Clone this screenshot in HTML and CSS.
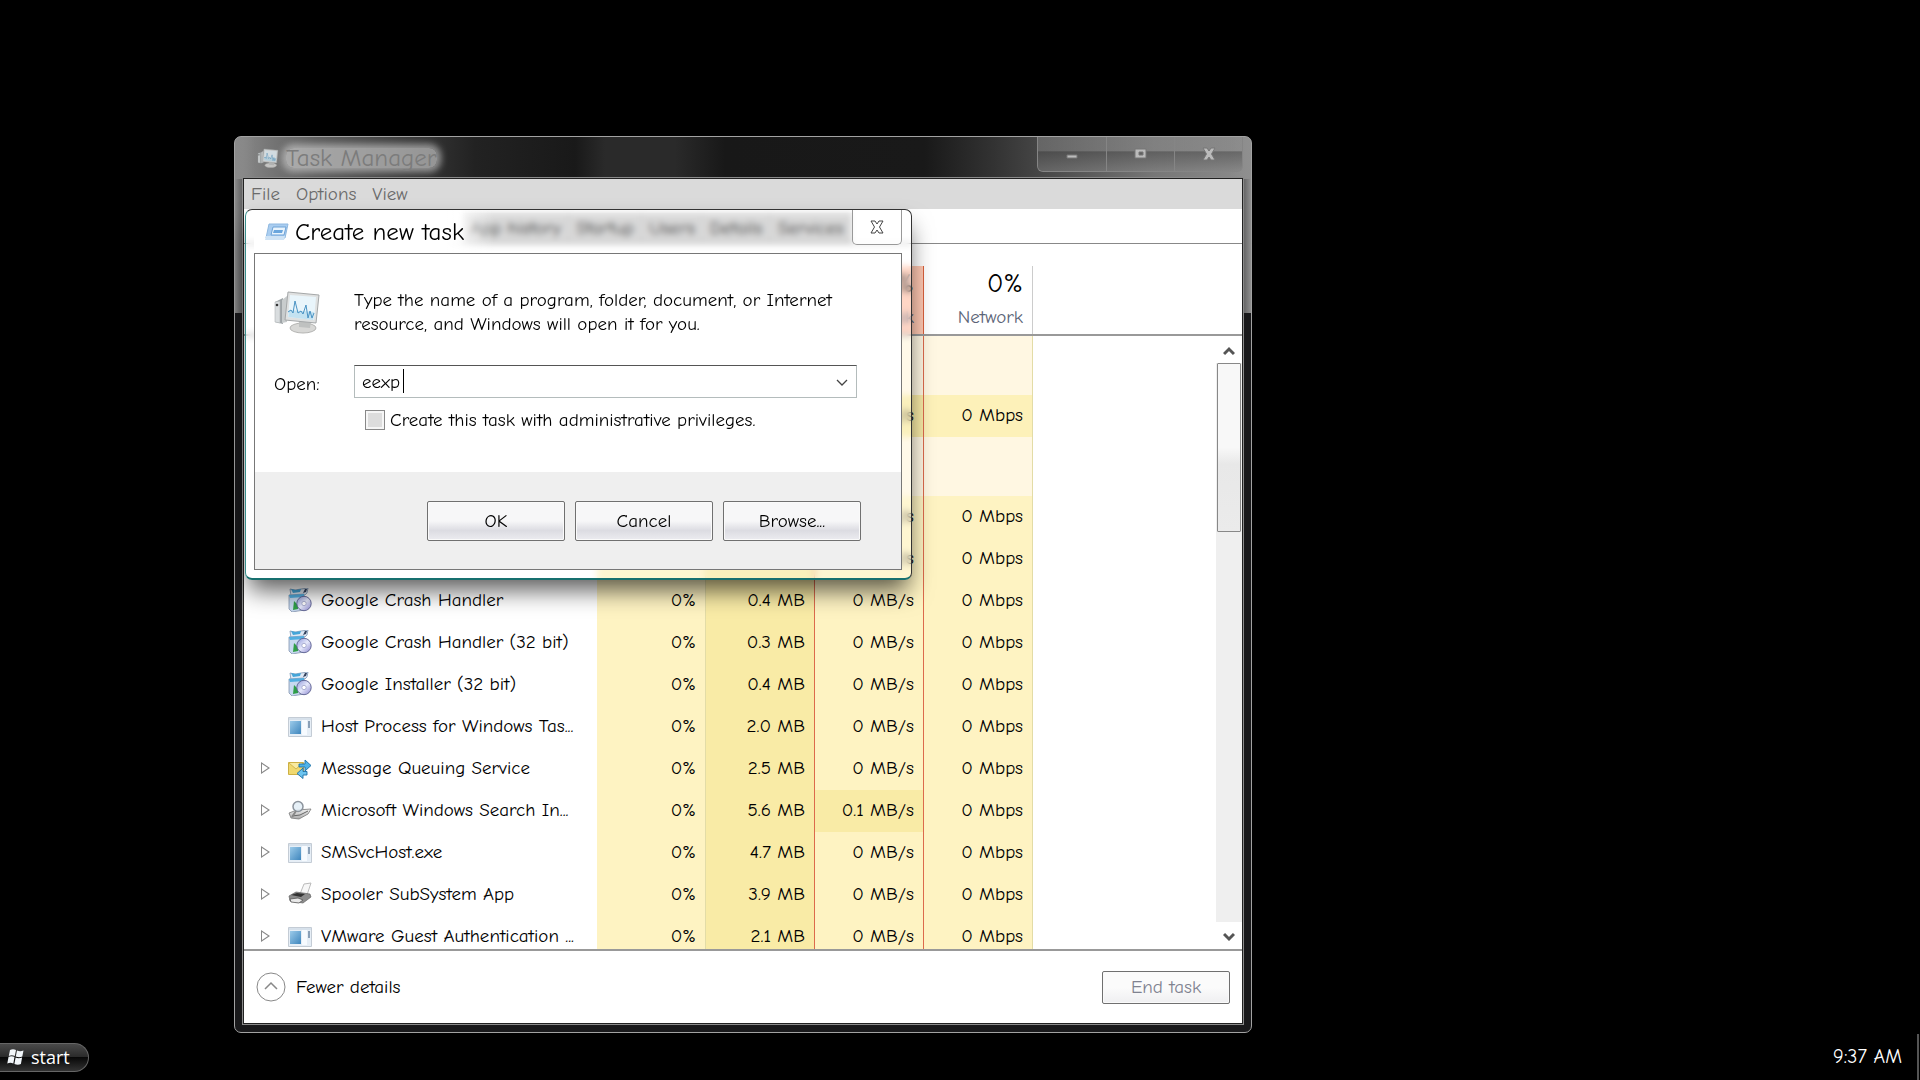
FILE: index.html
```html
<!DOCTYPE html>
<html lang="en">
<head>
<meta charset="utf-8">
<title>Task Manager</title>
<link rel="stylesheet" href="styles.css">
</head>
<body>
<svg class="defs" width="0" height="0" aria-hidden="true">
  <linearGradient id="blue" x1="0" y1="0" x2="1" y2="1"><stop offset="0" stop-color="#9ccbea"/><stop offset="1" stop-color="#3f86bd"/></linearGradient>
  <linearGradient id="disc" x1="0" y1="0" x2="1" y2="1"><stop offset="0" stop-color="#8d96d8"/><stop offset=".5" stop-color="#e6e9fb"/><stop offset="1" stop-color="#8a86cf"/></linearGradient>
  <linearGradient id="metal" x1="0" y1="0" x2="0" y2="1"><stop offset="0" stop-color="#f2f2f2"/><stop offset="1" stop-color="#a9a9a9"/></linearGradient>
  <symbol id="i-setup" viewBox="0 0 24 24">
    <path d="M2 1l5 1 6-1 7-1-1 5-2 2-14 1z" fill="#dfe9f5" stroke="#7d95b4" stroke-width=".8"/>
    <path d="M3 1l5 1 5-1-1 3-7 1z" fill="#45a5d8"/><path d="M17 1l2 0-1 3-3 1z" fill="#33415c"/>
    <path d="M1 7l15-1v16l-12 2-3-3z" fill="#c7d9ef" stroke="#8494b0" stroke-width=".8"/>
    <path d="M1 7l15-1v3l-14 1z" fill="#52aee0"/><path d="M6 13l4 4v4l-5 1z" fill="#2f9e47"/>
    <circle cx="16" cy="15.500" r="7.200" fill="url(#disc)" stroke="#5a5f8f" stroke-width=".9"/>
    <circle cx="16" cy="15.500" r="2.200" fill="#fff" stroke="#9a9fc8" stroke-width=".8"/>
  </symbol>
  <symbol id="i-app" viewBox="0 0 24 24">
    <path d="M.5 3.500h23v19H.5z" fill="#e6eef6" stroke="#c4ccd5"/><path d="M1 4h22v2H1z" fill="#d7e1eb"/>
    <path d="M2 7h11v13H2z" fill="url(#blue)"/><path d="M14 6h5v15h-5z" fill="#f7fbff"/><path d="M20 7h2v7h-2z" fill="#8aa0b8"/>
  </symbol>
  <symbol id="i-queue" viewBox="0 0 24 24">
    <path d="M.5 6.500h15v12H.5z" fill="#f0d970" stroke="#cdb044"/><path d="M1 7l7 6 7-6" fill="#f8eaa0" stroke="#d3b84f"/>
    <path d="M11 8h6V4l6 5.500L17 15v-4h-6z" fill="#4fb3e8" stroke="#1d6fa6" stroke-width=".9"/>
    <path d="M19 15.500h-4V12l-6 5.500 6 5V19h4z" fill="#6cc4ef" stroke="#1d6fa6" stroke-width=".9"/>
  </symbol>
  <symbol id="i-search" viewBox="0 0 24 24">
    <path d="M1 15l8-3 14-1-3 5-9 5-8-1z" fill="url(#metal)" stroke="#777" stroke-width=".8"/><path d="M4 18l8-1 8-4" fill="none" stroke="#666"/>
    <circle cx="10" cy="8.500" r="5" fill="#e2edf6" fill-opacity=".85" stroke="#8b939c" stroke-width="1.500"/><path d="M8 13l-4 6" stroke="#888" stroke-width="2"/>
  </symbol>
  <symbol id="i-printer" viewBox="0 0 24 24">
    <path d="M12 12l4-10 7-1-4 12z" fill="#f7f7f7" stroke="#bbb"/><path d="M1 14l7-4 14 2 1 3-8 6-13-2z" fill="#8c8c8c" stroke="#666" stroke-width=".7"/>
    <path d="M3 13l6-2 8 1-4 3z" fill="#333"/><path d="M2 17l8-1 5 2-4 3-8-1z" fill="#e9e9e9" stroke="#555" stroke-width=".8"/>
  </symbol>
  <symbol id="i-monitor" viewBox="0 0 46 44">
    <path d="M1 12l8-4v26l-8-2z" fill="#9da3a6"/><path d="M1 12l5-1v22l-5-1z" fill="#d9dddf" stroke="#aeb3b5" stroke-width=".6"/><circle cx="3" cy="15" r="1.300" fill="#333"/>
    <path d="M8 10l5-4v26l-5 1z" fill="#c8cccd"/>
    <ellipse cx="29" cy="38" rx="13" ry="5" fill="#d8d8d6" stroke="#b5b5b3"/><path d="M25 30l12 2-1 6-11-1z" fill="#bfc1c0"/>
    <path d="M14 2l31 3-3 28-31-3z" fill="#dfe1e1" stroke="#a5a8a9"/><path d="M16 5l26 2-2 23-26-3z" fill="#e9f5fb"/>
    <path d="M15 20l25 2-.7 8-25-3z" fill="#c3e2f1"/>
    <path d="M14 22l3-2 2 3 2-12 3 12 3-2 2 3 3-9 2 13 2-7 2 7 2-5" fill="none" stroke="#4a93c4"/>
  </symbol>
  <symbol id="i-run" viewBox="0 0 24 18">
    <path d="M4 1h19l-3 14H1z" fill="#a9cdf0" stroke="#8fb8e0"/><path d="M8 4h13l-2 8H6z" fill="#e9f4fd" stroke="#6ea2d6"/><path d="M9 7h9l-1 3H8z" fill="#6ba6dd"/><path d="M1 13h19l-1 4H0z" fill="#cfe3f5"/>
  </symbol>
  <symbol id="i-x" viewBox="0 0 14 14">
    <path d="M1 1h4l2 3 2-3h4L9.500 7l3.500 6H9l-2-3-2 3H1l3.500-6z"/>
  </symbol>
</svg>

<main class="desktop">
  <section class="window">
    <header class="titlebar">
      <svg class="title-icon"><use href="#i-monitor"/></svg>
      <h1 class="title">Task Manager</h1>
      <div class="controls">
        <button class="control" type="button"><svg width="12" height="14" viewBox="0 0 12 14"><path d="M1 8h10v3H1z" fill="#bbb" stroke="#777"/></svg></button>
        <button class="control" type="button"><svg width="14" height="14" viewBox="0 0 14 14"><path d="M1 2h11v9H1zM5 5v3h4V5z" fill="#bbb" fill-rule="evenodd" stroke="#777"/></svg></button>
        <button class="control" type="button"><svg width="14" height="14" fill="#bbb" stroke="#777"><use href="#i-x"/></svg></button>
      </div>
    </header>

    <div class="client">
      <nav class="menubar">
        <button type="button">File</button><button type="button">Options</button><button type="button">View</button>
      </nav>
      <div class="tabs">
        <button type="button">App history</button><button type="button">Startup</button><button type="button">Users</button><button type="button">Details</button><button type="button">Services</button>
      </div>

      <div class="list">
        <table class="processes">
          <colgroup><col class="c-name"><col class="c-num"><col class="c-num"><col class="c-num"><col class="c-num"><col></colgroup>
          <thead>
            <tr><th></th><th></th><th></th><th class="disk"><strong>0%</strong><span>Disk</span></th><th class="net"><strong>0%</strong><span>Network</span></th><th></th></tr>
          </thead>
          <tbody>
            <tr class="group"><td></td><td></td><td></td><td></td><td></td><td></td></tr>
            <tr><td></td><td></td><td class="hot"></td><td class="hot">0 MB/s</td><td class="mid">0 Mbps</td><td></td></tr>
            <tr class="group"><td></td><td></td><td></td><td></td><td></td><td></td></tr>
            <tr><td></td><td></td><td class="hot"></td><td>0 MB/s</td><td>0 Mbps</td><td></td></tr>
            <tr><td></td><td></td><td class="hot"></td><td>0 MB/s</td><td>0 Mbps</td><td></td></tr>
            <tr><td><div class="proc"><i></i><svg><use href="#i-setup"/></svg><span>Google Crash Handler</span></div></td><td>0%</td><td class="hot">0.4 MB</td><td>0 MB/s</td><td>0 Mbps</td><td></td></tr>
            <tr><td><div class="proc"><i></i><svg><use href="#i-setup"/></svg><span>Google Crash Handler (32 bit)</span></div></td><td>0%</td><td class="hot">0.3 MB</td><td>0 MB/s</td><td>0 Mbps</td><td></td></tr>
            <tr><td><div class="proc"><i></i><svg><use href="#i-setup"/></svg><span>Google Installer (32 bit)</span></div></td><td>0%</td><td class="hot">0.4 MB</td><td>0 MB/s</td><td>0 Mbps</td><td></td></tr>
            <tr><td><div class="proc"><i></i><svg><use href="#i-app"/></svg><span>Host Process for Windows Tas...</span></div></td><td>0%</td><td class="hot">2.0 MB</td><td>0 MB/s</td><td>0 Mbps</td><td></td></tr>
            <tr><td><div class="proc"><i class="more"></i><svg><use href="#i-queue"/></svg><span>Message Queuing Service</span></div></td><td>0%</td><td class="hot">2.5 MB</td><td>0 MB/s</td><td>0 Mbps</td><td></td></tr>
            <tr><td><div class="proc"><i class="more"></i><svg><use href="#i-search"/></svg><span>Microsoft Windows Search In...</span></div></td><td>0%</td><td class="hot">5.6 MB</td><td class="hot">0.1 MB/s</td><td>0 Mbps</td><td></td></tr>
            <tr><td><div class="proc"><i class="more"></i><svg><use href="#i-app"/></svg><span>SMSvcHost.exe</span></div></td><td>0%</td><td class="hot">4.7 MB</td><td>0 MB/s</td><td>0 Mbps</td><td></td></tr>
            <tr><td><div class="proc"><i class="more"></i><svg><use href="#i-printer"/></svg><span>Spooler SubSystem App</span></div></td><td>0%</td><td class="hot">3.9 MB</td><td>0 MB/s</td><td>0 Mbps</td><td></td></tr>
            <tr><td><div class="proc"><i class="more"></i><svg><use href="#i-app"/></svg><span>VMware Guest Authentication ...</span></div></td><td>0%</td><td class="hot">2.1 MB</td><td>0 MB/s</td><td>0 Mbps</td><td></td></tr>
          </tbody>
        </table>
        <div class="scrollbar">
          <button type="button" class="arrow"><svg width="12" height="10" viewBox="0 0 12 10"><path d="M1 8l5-5 5 5" fill="none" stroke="#555" stroke-width="3"/></svg></button>
          <div class="track"><div class="thumb"></div></div>
          <button type="button" class="arrow"><svg width="12" height="10" viewBox="0 0 12 10"><path d="M1 2l5 5 5-5" fill="none" stroke="#555" stroke-width="3"/></svg></button>
        </div>
      </div>

      <footer class="footer">
        <button type="button" class="fewer"><svg width="30" height="30" viewBox="0 0 30 30" fill="none" stroke="#888"><circle cx="15" cy="15" r="14"/><path d="M9 17l6-6 6 6" stroke-width="1.500"/></svg>Fewer details</button>
        <button type="button" class="push end" disabled>End task</button>
      </footer>

      <section class="dialog">
        <header class="dialog-title">
          <svg class="run-icon"><use href="#i-run"/></svg>
          <h2>Create new task</h2>
          <button type="button" class="dialog-close"><svg width="14" height="14" fill="#fff" stroke="#444"><use href="#i-x"/></svg></button>
        </header>
        <form class="dialog-body">
          <div class="fields">
            <svg class="big-icon"><use href="#i-monitor"/></svg>
            <p>Type the name of a program, folder, document, or Internet<br>resource, and Windows will open it for you.</p>
            <label for="open">Open:</label>
            <div class="combo">
              <span class="entry"><input id="open" type="text" value="eexp"><b class="caret"></b></span>
              <button type="button"><svg width="14" height="10" viewBox="0 0 14 10"><path d="M2 2l5 5 5-5" fill="none" stroke="#444" stroke-width="1.300"/></svg></button>
            </div>
            <div class="check"><input id="admin" type="checkbox"><label for="admin">Create this task with administrative privileges.</label></div>
          </div>
          <div class="actions">
            <button type="button" class="push">OK</button>
            <button type="button" class="push">Cancel</button>
            <button type="button" class="push">Browse...</button>
          </div>
        </form>
      </section>
    </div>
  </section>

  <footer class="taskbar">
    <button type="button" class="start"><svg width="18" height="18" viewBox="0 0 18 18" fill="#f2f6fa"><path d="M3 2q3-1.500 6 0L7.800 8q-3-1.500-6 0zM10 2.500q3 1.500 6.500 0L15.300 8.500q-3 1.500-6.500 0zM1.500 9q3-1.500 6 0L6.300 15.500q-3-1.500-6 0zM8.600 9.500q3 1.500 6.500 0L13.900 16q-3 1.500-6.500 0z"/></svg>start</button>
    <time class="clock">9:37 AM</time>
    <span class="peek"></span>
  </footer>
</main>
</body>
</html>
```
FILE: styles.css
```css
* { box-sizing: border-box; }
body {
  margin: 0;
  background: #000;
  color: #000;
  font: 19px/24px "Comic Sans MS", "Comic Neue", "Open Sans", sans-serif;
}
button, input { font: inherit; color: inherit; }
button { margin: 0; padding: 0; border: 0; background: none; }
h1, h2, p { margin: 0; font-weight: 400; }
.defs { position: absolute; }
.desktop { position: relative; min-height: 100vh; overflow: hidden; display: flex; flex-direction: column; justify-content: flex-end; }

.window {
  position: absolute;
  left: 234px;
  top: 136px;
  width: 1018px;
  padding: 0 8px 8px;
  border: 1px solid #a2a2a2;
  border-radius: 7px;
  background:
    linear-gradient(90deg, #8a8a8a, transparent 20px) 0 0 / 20px 176px no-repeat,
    linear-gradient(270deg, #8f8f8f, transparent 20px) 100% 0 / 20px 176px no-repeat,
    linear-gradient(90deg, #8a8a8a 0, #5c5c5c 80px, #222 240px, #191919 340px, #2a2a2a 370px, #2a2a2a 440px, #181818 490px, #191919 690px, #333 760px, #777 920px, #8c8c8c 100%) 0 0 / 100% 42px no-repeat,
    #19191b;
}
.titlebar { display: flex; align-items: center; height: 41px; padding-left: 14px; }
.title-icon { width: 22px; height: 20px; margin-right: 7px; opacity: .8; }
.title {
  font-size: 25px;
  line-height: 20px;
  color: #7c7c7c;
  border-radius: 8px;
  background: rgba(205, 205, 205, .65);
  box-shadow: 0 0 7px 4px rgba(205, 205, 205, .65);
}
.controls { display: flex; align-self: flex-start; height: 35px; margin-left: auto; border: 1px solid #858585; border-top: 0; border-radius: 0 0 6px 6px; overflow: hidden; }
.control { display: grid; place-items: center; width: 68px; background: linear-gradient(rgba(140, 140, 140, .45) 42%, rgba(80, 80, 80, .6) 43%, rgba(130, 130, 130, .5)); }
.control + .control { border-left: 1px solid #858585; }

.client { position: relative; border: 1px solid #222; outline: 1px solid #8a8a8a; background: #fff; }
.menubar { display: flex; gap: 16px; height: 30px; padding: 0 7px; background: #dadada; color: #6b6b6b; }
.tabs { display: flex; align-items: flex-end; height: 35px; padding-left: 219px; border-bottom: 1px solid #888; }
.tabs button { height: 30px; padding: 0 7px; border-right: 1px solid #bbb; background: #ccc; }

.list { position: relative; height: 707px; overflow: hidden; border-bottom: 2px solid #999; }
.processes { width: 100%; table-layout: fixed; border-collapse: separate; border-spacing: 0; }
.c-name { width: 353px; }
.c-num { width: 109px; }
th { height: 92px; padding: 23px 0 0; border-bottom: 2px solid #999; font-weight: 400; text-align: right; vertical-align: top; }
th strong, th span { display: block; padding-right: 10px; }
th strong { font-size: 27px; line-height: 34px; font-weight: 400; }
th span { line-height: 32px; color: #5b6477; }
.disk { background: linear-gradient(#d9603c, #d9603c) 100% 100% / 1px 68px no-repeat, linear-gradient(#ffc8b2, #ffc8b2) 0 100% / 100% 68px no-repeat; }
.net { background: linear-gradient(#ccc, #ccc) 100% 100% / 1px 68px no-repeat; }
td { height: 42px; padding: 0 0 2px; text-align: right; white-space: nowrap; }
td:nth-child(n+2):nth-child(-n+5) { padding-right: 9px; background: #fef3c2; border-right: 1px solid #e3dca6; }
tr td:nth-child(3):nth-child(n+2), tr td:nth-child(4):nth-child(n+2) { border-right-color: #dc6a4c; }
.processes tbody .hot:nth-child(n+2) { background: #f9eba6; }
.processes tbody .mid:nth-child(n+2) { background: #fdf1b9; }
.group td { height: 59px; }
.group td:nth-child(n+2):nth-child(-n+5) { background: #fff7e2; }
.proc { display: flex; align-items: center; padding-left: 17px; }
.proc svg { width: 24px; height: 24px; margin: 0 9px 0 18px; }
.proc i { width: 9px; height: 12px; }
.more { background: #888; clip-path: polygon(evenodd, 0 0, 100% 50%, 0 100%, 0 0, 1px 2px, 1px 10px, 7px 6px, 1px 2px); }

.scrollbar { position: absolute; top: 92px; right: 0; bottom: 0; width: 26px; display: flex; flex-direction: column; background: #fff; }
.arrow { flex: 0 0 27px; }
.track { flex: 1; padding-left: 1px; background: #efefef; }
.thumb { width: 24px; height: 169px; border: 1px solid #888; border-radius: 1px; background: linear-gradient(#f8f8f8 50%, #e8e8e8 60%, #ebebeb); }

.footer { display: flex; align-items: center; justify-content: space-between; height: 72px; padding: 0 12px; }
.fewer { display: flex; align-items: center; gap: 10px; }
.push { width: 138px; height: 40px; border: 1px solid #707070; border-radius: 2px; background: linear-gradient(#f7f7f8 50%, #dcdce2 75%, #ececf0); box-shadow: inset 0 0 0 1px #fafafa; }
.end { width: 128px; height: 33px; color: #7f8290; background: linear-gradient(#fbfbfb 50%, #efeff1); }

.dialog {
  position: absolute;
  top: 30px;
  left: 1px;
  width: 667px;
  padding: 0 9px 8px 8px;
  border: 1px solid #333;
  border-left-color: #3a8f8d;
  border-bottom: 2px solid #17706f;
  border-radius: 7px;
  background: rgba(255, 255, 255, .25);
  backdrop-filter: blur(3px);
  box-shadow: 0 14px 24px -4px rgba(0, 0, 0, .65);
}
.dialog-title { display: flex; align-items: center; height: 43px; padding-left: 11px; background: linear-gradient(90deg, #fff 190px, transparent 240px); }
.run-icon { width: 24px; height: 18px; margin-right: 6px; }
.dialog-title h2 { font-size: 25px; }
.dialog-close { align-self: flex-start; display: grid; place-items: center; width: 50px; height: 35px; margin-left: auto; border: 1px solid #999; border-top: 0; border-radius: 0 0 5px 5px; background: rgba(255, 255, 255, .75); }
.dialog-body { border: 1px solid #777; background: #fff; }
.fields { display: grid; grid-template-columns: 80px 503px; align-items: center; padding: 34px 0 41px 19px; height: 218px; align-content: start; }
.big-icon { width: 46px; height: 44px; }
.fields p { white-space: nowrap; }
.combo { display: flex; justify-content: space-between; height: 33px; margin: 29px 0 10px; border: 1px solid #b4bcbc; border-top-color: #555; }
.fields > label { margin-top: 24px; }
.entry { position: relative; flex: 1; display: flex; }
.entry input { width: 100%; padding: 0 7px; border: 0; outline: 0; background: none; }
.caret { position: absolute; left: 48px; top: 3px; width: 1px; height: 24px; background: #000; }
.combo button { width: 28px; }
.check { grid-column: 2; display: flex; align-items: center; gap: 5px; padding-left: 11px; }
.check input { appearance: none; width: 20px; height: 20px; margin: 0; border: 1px solid #888; background: #ddd; box-shadow: inset 0 0 0 2px #f6f6f6; }
.actions { display: flex; justify-content: flex-end; gap: 10px; height: 97px; padding: 29px 40px 0; background: #efefef; }

.taskbar { display: flex; align-items: center; height: 46px; color: #fff; }
.start { display: flex; align-items: center; gap: 6px; width: 89px; height: 29px; padding-left: 7px; border: 1px solid #666; border-left: 0; border-radius: 0 15px 15px 0; background: linear-gradient(#4a4a4a, #2a2a2a 48%, #080808 50%, #333); font-family: "Open Sans", sans-serif; font-size: 18px; }
.clock { margin-left: auto; margin-right: 15px; font-size: 20px; }
.peek { width: 3px; height: 46px; border-left: 2px solid #555; }
```
